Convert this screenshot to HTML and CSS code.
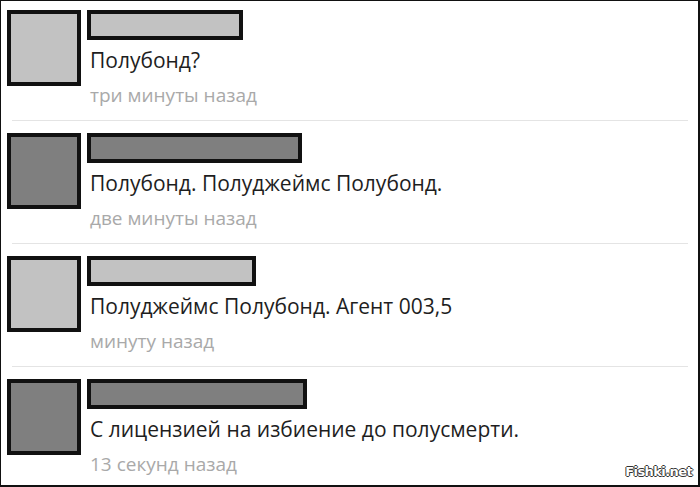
FILE: index.html
```html
<!DOCTYPE html>
<html lang="ru">
  <head>
    <meta charset="UTF-8" />
    <meta name="viewport" content="width=device-width, initial-scale=1.0" />
    <title>Полубонд</title>
    <link rel="stylesheet" href="styles.css">
  </head>
  <body>
    <div class="frame">
      <!-- Comment 1 -->
      <div class="post">
        <div class="avatar light"></div>
        <div class="post-body">
          <div class="name light" style="width: 148px"></div>
          <div class="message">Полубонд?</div>
          <div class="time">три минуты назад</div>
        </div>
      </div>

      <!-- Comment 2 -->
      <div class="post">
        <div class="avatar dark"></div>
        <div class="post-body">
          <div class="name dark" style="width: 207px"></div>
          <div class="message">Полубонд. Полуджеймс Полубонд.</div>
          <div class="time">две минуты назад</div>
        </div>
      </div>

      <!-- Comment 3 -->
      <div class="post">
        <div class="avatar light"></div>
        <div class="post-body">
          <div class="name light" style="width: 161px"></div>
          <div class="message">Полуджеймс Полубонд. Агент 003,5</div>
          <div class="time">минуту назад</div>
        </div>
      </div>

      <!-- Comment 4 -->
      <div class="post last">
        <div class="avatar dark"></div>
        <div class="post-body">
          <div class="name dark" style="width: 212px"></div>
          <div class="message">С лицензией на избиение до полусмерти.</div>
          <div class="time">13 секунд назад</div>
        </div>
      </div>

      <div class="watermark">Fishki.net</div>
    </div>
  </body>
</html>
```

FILE: styles.css
```css
body {
  margin: 0;
  font-family: "Open Sans", Arial, sans-serif;
  background-color: white;
}

.frame {
  position: relative;
  width: 700px;
  height: 487px;
  box-sizing: border-box;
  border-style: solid;
  border-color: #111;
  border-width: 1px 2px 2px 1px;
  padding: 0 10px 0 5px;
  overflow: hidden;
}

.post {
  display: flex;
  gap: 6px;
  padding: 9px 0 10px 0;
  margin-bottom: 3px;
  border-bottom: 1px solid #e4e4e4;
  margin-left: 6px;
}

.post .avatar {
  margin-left: -5px;
}

.post.last {
  border-bottom: none;
  margin-bottom: 0;
}

.avatar {
  width: 66px;
  height: 68px;
  border: 4px solid #111;
  flex-shrink: 0;
}

.light {
  background-color: #c2c2c2;
}

.dark {
  background-color: #7f7f7f;
}

.post-body {
  display: flex;
  flex-direction: column;
  align-items: flex-start;
}

.name {
  height: 22px;
  border: 4px solid #111;
}

.message {
  margin-top: 3px;
  padding-left: 3px;
  font-size: 21px;
  line-height: 34px;
  color: #1e1e1e;
}

.time {
  margin-top: 3px;
  padding-left: 3px;
  font-size: 19px;
  line-height: 30px;
  color: #a9a9a9;
}

.watermark {
  position: absolute;
  right: 6px;
  bottom: 6px;
  font-family: "DejaVu Sans", sans-serif;
  font-weight: bold;
  font-size: 13px;
  letter-spacing: -0.6px;
  color: white;
  text-shadow: -1px 0 #333, 1px 0 #333, 0 -1px #333, 0 1px #333;
}
```
